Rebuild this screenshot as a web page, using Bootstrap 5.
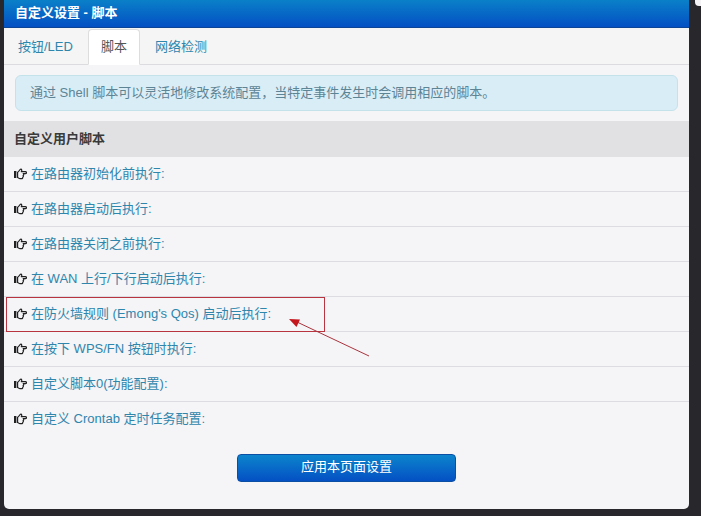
<!DOCTYPE html>
<html lang="zh-CN">
<head>
<meta charset="utf-8">
<meta name="viewport" content="width=device-width, initial-scale=1">
<title>自定义设置 - 脚本</title>
<link href="https://cdn.jsdelivr.net/npm/bootstrap@5.3.0/dist/css/bootstrap.min.css" rel="stylesheet">
<style>
body{background:#28272b;color:#333;font:13px/20px "Liberation Sans","Noto Sans CJK SC",sans-serif}
a{color:#2f86ac}
.corner-tab{width:6px;height:6px;background:#f4f2f4;border-radius:0 0 0 4px;top:0;right:0}
.panel{margin:0 12px 7px 4px;background:#f5f4f7;border-radius:0 0 5px 5px;padding-bottom:27px}
.panel-title{background:linear-gradient(#0a80c8,#0450c4);color:#fff;font-size:13px;font-weight:700;line-height:20px;padding:3px 11px 4px;margin:0;border-bottom:1px solid #0c4596}
.nav-tabs{background:#f5f5f5;border-color:#dcdce0;padding:1px 1px 0}
.nav-tabs .nav-link{color:#2f86ac;padding:7px 12px;border-radius:4px 4px 0 0;margin-right:2px}
.nav-tabs .nav-link.active{color:#555;background:#fff;border-color:#ddd #ddd #fff}
.tip{background:#d9edf7;border-color:#c4e2ea;color:#5d8494;margin:10px 11px;padding:7px 14px}
.section-title{background:#e1e1e4;font-size:13px;font-weight:700;line-height:20px;padding:8px 10px;margin:0;color:#3a3a3a}
.script-row{background:transparent;border-color:#dcdce2;padding:7px 10px}
.hand{width:13px;height:12px;margin-right:4px;flex:none;color:#222}
.frame{inset:0 auto -1px 2px;width:319px;border:1px solid #b8353f;pointer-events:none;z-index:2}
.arrow{left:283px;top:20px;z-index:3;pointer-events:none}
.apply{width:219px;height:28px;margin-top:18px;padding:2px 0 4px;font-size:13px;line-height:20px;color:#fff;border:1px solid #0a4fa4;border-radius:4px;background:linear-gradient(#0c84cc,#0450c4)}
.apply:hover{color:#fff}
</style>
</head>
<body>
<div class="corner-tab position-absolute"></div>
<main class="panel overflow-hidden">
  <h1 class="panel-title">自定义设置 - 脚本</h1>
  <ul class="nav nav-tabs">
    <li class="nav-item"><a class="nav-link" href="#">按钮/LED</a></li>
    <li class="nav-item"><a class="nav-link active" aria-current="page" href="#">脚本</a></li>
    <li class="nav-item"><a class="nav-link" href="#">网络检测</a></li>
  </ul>
  <div class="alert tip" role="note">通过 Shell 脚本可以灵活地修改系统配置，当特定事件发生时会调用相应的脚本。</div>
  <h2 class="section-title">自定义用户脚本</h2>
  <svg class="d-none" aria-hidden="true">
    <symbol id="hand" viewBox="0 0 13 12">
      <path d="M0 3h2.400v7H0z" fill="currentColor"/>
      <path d="M3.600 4.200C5.200 3.600 5.600 1.200 6.800 1.200C8 1.200 8 2.600 7.300 3.700H11.400C12.800 3.700 12.800 5.700 11.400 5.700H9.200C10 6.200 9.900 7.300 9.100 7.600C9.600 8.300 9.300 9 8.700 9.200C8.900 10.100 8.400 10.700 7.500 10.700H6C4.900 10.700 4.600 9.700 3.600 9.500Z" fill="none" stroke="currentColor" stroke-width="1.2" stroke-linejoin="round"/>
    </symbol>
  </svg>
  <ul class="list-group list-group-flush">
    <li class="list-group-item script-row d-flex align-items-center"><svg class="hand"><use href="#hand"/></svg><a class="text-decoration-none" href="#">在路由器初始化前执行:</a></li>
    <li class="list-group-item script-row d-flex align-items-center"><svg class="hand"><use href="#hand"/></svg><a class="text-decoration-none" href="#">在路由器启动后执行:</a></li>
    <li class="list-group-item script-row d-flex align-items-center"><svg class="hand"><use href="#hand"/></svg><a class="text-decoration-none" href="#">在路由器关闭之前执行:</a></li>
    <li class="list-group-item script-row d-flex align-items-center"><svg class="hand"><use href="#hand"/></svg><a class="text-decoration-none" href="#">在 WAN 上行/下行启动后执行:</a></li>
    <li class="list-group-item script-row d-flex align-items-center position-relative"><svg class="hand"><use href="#hand"/></svg><a class="text-decoration-none" href="#">在防火墙规则 (Emong's Qos) 启动后执行:</a>
      <span class="frame position-absolute"></span>
      <svg class="arrow position-absolute" width="84" height="42" viewBox="0 0 84 42" aria-hidden="true"><path d="M10 5L82 39" stroke="#a8343e" stroke-width="1"/><path d="M2 2L13 2.500L9.500 10Z" fill="#c4161c"/></svg>
    </li>
    <li class="list-group-item script-row d-flex align-items-center"><svg class="hand"><use href="#hand"/></svg><a class="text-decoration-none" href="#">在按下 WPS/FN 按钮时执行:</a></li>
    <li class="list-group-item script-row d-flex align-items-center"><svg class="hand"><use href="#hand"/></svg><a class="text-decoration-none" href="#">自定义脚本0(功能配置):</a></li>
    <li class="list-group-item script-row d-flex align-items-center"><svg class="hand"><use href="#hand"/></svg><a class="text-decoration-none" href="#">自定义 Crontab 定时任务配置:</a></li>
  </ul>
  <div class="text-center"><button type="button" class="btn apply">应用本页面设置</button></div>
</main>
<script src="https://cdn.jsdelivr.net/npm/bootstrap@5.3.0/dist/js/bootstrap.bundle.min.js"></script>
</body>
</html>
